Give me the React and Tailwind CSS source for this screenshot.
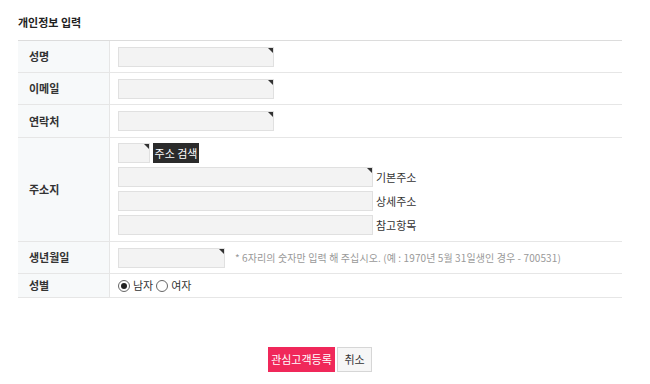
import React from "react";

const font = { fontFamily: '"Noto Sans CJK KR", "Noto Sans", sans-serif' };

function Field({ w, tri = true }) {
  return (
    <div className={`relative h-[20px] ${w} border border-[#e0e0e0] bg-[#f3f3f3]`}>
      {tri && (
        <div className="absolute right-0 top-0 h-0 w-0 border-l-[5px] border-t-[5px] border-l-transparent border-t-[#333]" />
      )}
    </div>
  );
}

function Row({ label, h, children }) {
  return (
    <div className={`flex border-b border-[#e6e6e6] ${h}`}>
      <div className="flex w-[92px] shrink-0 items-center border-r border-[#e6e6e6] bg-[#f7f9fa] pl-[11px] text-[11px] font-bold text-[#333]">
        {label}
      </div>
      <div className="flex flex-1 items-center pl-[8px]">{children}</div>
    </div>
  );
}

function Radio({ checked }) {
  return (
    <div className="flex h-[12px] w-[12px] items-center justify-center rounded-full border border-[#666] bg-white">
      {checked && <div className="h-[6px] w-[6px] rounded-full bg-[#222]" />}
    </div>
  );
}

export default function App() {
  return (
    <div className="h-[384px] w-[650px] bg-white" style={font}>
      <div className="w-[640px] px-[18px] pt-[14px]">
        <div className="h-[26px] text-[11px] font-bold leading-[16px] text-[#222]">개인정보 입력</div>
        <div className="w-[604px] border-t border-[#dcdcdc]">
          <Row label="성명" h="h-[32px]">
            <Field w="w-[156px]" />
          </Row>
          <Row label="이메일" h="h-[32px]">
            <Field w="w-[156px]" />
          </Row>
          <Row label="연락처" h="h-[33px]">
            <Field w="w-[156px]" />
          </Row>
          <div className="flex h-[104px] border-b border-[#e6e6e6]">
            <div className="flex w-[92px] shrink-0 items-center border-r border-[#e6e6e6] bg-[#f7f9fa] pl-[11px] text-[11px] font-bold text-[#333]">
              주소지
            </div>
            <div className="flex flex-1 flex-col gap-[4px] pl-[8px] pt-[5px]">
              <div className="flex items-center gap-[3px]">
                <Field w="w-[32px]" />
                <div className="flex h-[20px] w-[46px] items-center justify-center bg-[#2b2b2b] text-[11px] text-white">주소 검색</div>
              </div>
              <div className="flex items-center gap-[3px]">
                <Field w="w-[255px]" />
                <span className="text-[11px] text-[#333]">기본주소</span>
              </div>
              <div className="flex items-center gap-[3px]">
                <Field w="w-[255px]" tri={false} />
                <span className="text-[11px] text-[#333]">상세주소</span>
              </div>
              <div className="flex items-center gap-[3px]">
                <Field w="w-[255px]" tri={false} />
                <span className="text-[11px] text-[#333]">참고항목</span>
              </div>
            </div>
          </div>
          <Row label="생년월일" h="h-[32px]">
            <Field w="w-[107px]" />
            <span className="ml-[10px] text-[10px] tracking-[0.1px] text-[#999]">
              * 6자리의 숫자만 입력 해 주십시오. (예 : 1970년 5월 31일생인 경우 - 700531)
            </span>
          </Row>
          <Row label="성별" h="h-[24px]">
            <div className="flex items-center gap-[3px] text-[11px] text-[#333]">
              <Radio checked />
              <span>남자</span>
              <Radio />
              <span>여자</span>
            </div>
          </Row>
        </div>
        <div className="mt-[49px] flex justify-center gap-[2px]">
          <div className="flex h-[25px] w-[67px] items-center justify-center bg-[#f0285a] text-[11px] text-white">관심고객등록</div>
          <div className="flex h-[25px] w-[35px] items-center justify-center border border-[#d6d6d6] bg-[#f6f6f6] text-[11px] text-[#333]">취소</div>
        </div>
      </div>
    </div>
  );
}
